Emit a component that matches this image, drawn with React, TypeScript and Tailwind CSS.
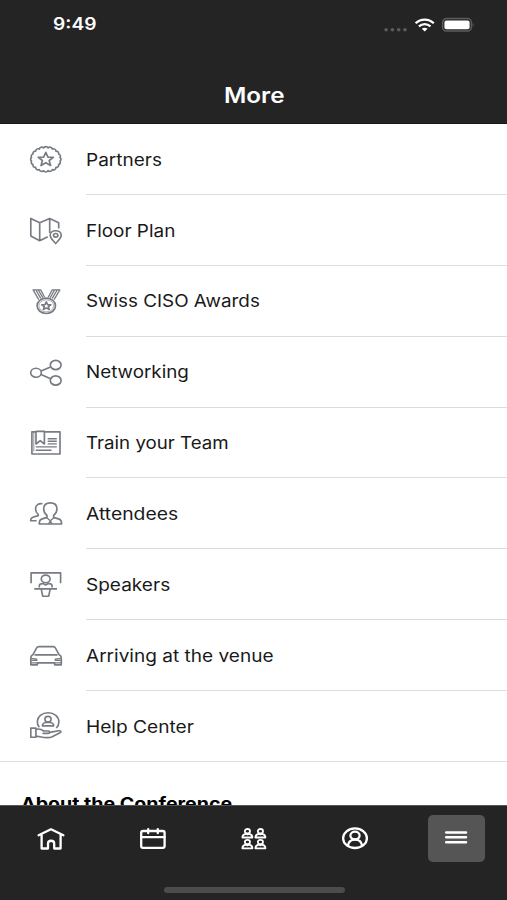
import React from "react";

const STAR = "M0 -1 L.27 -.34 L.95 -.31 L.42 .12 L.6 .81 L0 .42 L-.6 .81 L-.42 .12 L-.95 -.31 L-.27 -.34 Z";

const Icon: React.FC<{ children: React.ReactNode }> = ({ children }) => (
    <svg width="36" height="36" viewBox="0 0 36 36" fill="none" stroke="#777b82" strokeWidth="1.65" strokeLinejoin="round" className="shrink-0 mt-px">
        {children}
    </svg>
);

/** scalloped outline for the partners badge */
const scallops = () => {
    const n = 20;
    const point = (i: number) => {
        const a = ((i + 0.5) / n) * Math.PI * 2;
        return `${(17.8 + 14.4 * Math.cos(a)).toFixed(2)} ${(17.3 + 11.5 * Math.sin(a)).toFixed(2)}`;
    };
    let d = `M${point(0)}`;
    for (let i = 1; i <= n; i++) d += `A2.5 2.3 0 0 1 ${point(i)}`;
    return d + "Z";
};

const items = [
    {
        label: "Partners",
        width: 76,
        icon: (
            <Icon>
                <path d={scallops()} />
                <path d={STAR} transform="translate(17.8 17.6) scale(8 7.3)" vectorEffect="non-scaling-stroke" />
            </Icon>
        ),
    },
    {
        label: "Floor Plan",
        width: 89,
        icon: (
            <Icon>
                <path d="M30.7 15.4V9.7L21.7 5.4L11.7 9.7L2.8 5.4V23.1L11.7 27.7L19.7 23.8M11.7 9.7V27.7M21.7 5.4V20" />
                <path d="M27.7 30.6C25.8 28 22.2 25.6 22.2 22.3C22.2 19.5 24.7 17.7 27.7 17.7S33.2 19.5 33.2 22.3C33.2 25.6 29.6 28 27.7 30.6Z" />
                <ellipse cx="27.7" cy="22.3" rx="2.2" ry="1.8" />
            </Icon>
        ),
    },
    {
        label: "Swiss CISO Awards",
        width: 174,
        icon: (
            <Icon>
                <ellipse cx="18.3" cy="21.8" rx="9.2" ry="7.7" />
                <ellipse cx="18.3" cy="21.8" rx="7.4" ry="6" strokeWidth=".6" />
                <path d={STAR} transform="translate(18.3 22.1) scale(4.8 4.2)" vectorEffect="non-scaling-stroke" />
                <path d="M10.8 15.6L5.1 5.9H12.7L16.6 13.2M20.2 13.2L24.2 5.9H31.9L26 15.6M7.9 6L12.8 14.4M10.3 6L14.8 13.6M26.6 6L22.2 13.6M29.2 6L24.2 14.4" strokeWidth="1.3" />
            </Icon>
        ),
    },
    {
        label: "Networking",
        width: 103,
        icon: (
            <Icon>
                <ellipse cx="8" cy="17.7" rx="5.3" ry="4.5" />
                <ellipse cx="27.7" cy="10" rx="5.4" ry="4.6" />
                <ellipse cx="27.7" cy="25.5" rx="5.4" ry="4.6" />
                <path d="M13 16L22.6 12M13 19.6L22.6 23.7" />
            </Icon>
        ),
    },
    {
        label: "Train your Team",
        width: 143,
        icon: (
            <Icon>
                <path d="M8 6.9H3.9V29H32V6.9H16.4" />
                <path d="M8 6.4H16.4V19L12.2 15.6L8 19Z" />
                <path d="M5.8 7V26.5" strokeWidth=".8" />
                <path d="M19.7 13.7H28.8M19.7 16.3H28.8M19.7 18.9H28.8M7.7 21.9H28.8M7.7 25.2H23.5" strokeWidth="1.4" />
            </Icon>
        ),
    },
    {
        label: "Attendees",
        width: 92,
        icon: (
            <Icon>
                <path d="M19 19.5C16.7 17.7 15.5 15 15.7 12.3C15.9 8.8 18.5 6.8 22.3 6.8S28.7 8.8 28.9 12.3C29.1 15 27.9 17.7 25.6 19.5V21.4L31.2 23.1C33.2 23.9 33.6 25.3 33.6 28H11.2C11.2 25.3 11.6 23.9 13.6 23.1L19 21.4Z" />
                <path d="M18.5 21.6L22.3 24.8L26.2 21.6M22.3 24.8L20.5 28M22.3 24.8L24.2 28" strokeWidth="1.3" />
                <path d="M14.5 7.7C10.5 7 7.6 9.2 7.6 12.4C7.4 15 8.4 16.9 10.2 18.3V19.6L4.8 21.3C3.1 22 2.6 22.9 2.6 24.7H8.6" />
            </Icon>
        ),
    },
    {
        label: "Speakers",
        width: 84,
        icon: (
            <Icon>
                <path d="M3.1 16.3V5.9H32.6V16.3" />
                <ellipse cx="17.7" cy="11.9" rx="4.4" ry="3.8" />
                <path d="M11.3 20.4V18.7C11.3 17.2 12.6 16.6 15 16.6L17.7 18L20.4 16.6C22.8 16.6 24.1 17.2 24.1 18.7V20.4M6.2 21.9H29M13.2 21.9L14.7 29.2H20.7L22.2 21.9" />
            </Icon>
        ),
    },
    {
        label: "Arriving at the venue",
        width: 187,
        icon: (
            <Icon>
                <path d="M4.8 16.8L8.8 9.7C9.2 8.9 9.8 8.6 10.8 8.6H25.2C26.2 8.6 26.8 8.9 27.2 9.7L31.2 16.8C32.7 17.5 33.3 18.4 33.3 19.7V26.8H26.6V24.9H9.4V26.8H2.8V19.7C2.8 18.4 3.4 17.5 4.8 16.8ZM6.5 16.8H29.5" />
                <path d="M3.2 20.3L8.8 21.1V22.4H3M32.8 20.3L27.2 21.1V22.4H33M3 24.9H9.4M26.6 24.9H33" strokeWidth="1.2" />
            </Icon>
        ),
    },
    {
        label: "Help Center",
        width: 108,
        icon: (
            <Icon>
                <path d="M11.3 19.3C8.3 15.5 8.8 10.4 12.4 7.3C16.5 3.9 23.7 3.9 27.8 7.3C31.9 10.8 31.8 16.5 28.3 20" />
                <ellipse cx="20" cy="11.2" rx="3.1" ry="2.8" />
                <path d="M14.4 17.9C14.4 15.5 15.4 14.7 18.2 14.5H21.8C24.6 14.7 25.7 15.5 25.7 17.9Z" />
                <path d="M2.8 20.1H7.9V29.2H2.8ZM7.9 21.4C11 20.5 13.5 21.2 15.6 23H20.2C22.1 23 22.1 25.4 20.2 25.4H14.5M22 24.4L30.5 22.8C33.5 22.5 33.6 24 31.5 25L23.7 29C19.2 31 12.3 28.6 7.9 28.1" />
            </Icon>
        ),
    },
];

/** wide text, every label is fitted to its own width */
const Label: React.FC<{ text: string; width: number; className: string }> = ({ text, width, className }) => {
    const ref = React.useRef<HTMLSpanElement>(null);
    const [scale, setScale] = React.useState(1.17);

    React.useLayoutEffect(() => {
        if (ref.current) setScale(width / ref.current.offsetWidth);
    }, [width]);

    return (
        <span ref={ref} className={`inline-block origin-left whitespace-nowrap ${className}`} style={{ transform: `scaleX(${scale})` }}>
            {text}
        </span>
    );
};

const Person: React.FC<{ x: number; y: number }> = ({ x, y }) => (
    <g transform={`translate(${x} ${y})`}>
        <ellipse cx="5.2" cy="2.7" rx="2.6" ry="2.2" />
        <path d="M.2 9C.2 6.8 1.4 5.8 3.6 5.4L5.2 6L6.8 5.4C9 5.8 10.2 6.8 10.2 9Z" />
    </g>
);

const TabIcon: React.FC<{ children: React.ReactNode }> = ({ children }) => (
    <svg width="30" height="28" viewBox="0 0 30 28" fill="none" stroke="white" strokeWidth="2.3" strokeLinecap="round" strokeLinejoin="round">
        {children}
    </svg>
);

const App: React.FC = () => {
    return (
        <div className="flex flex-col w-full h-[900px] bg-white overflow-hidden font-[Inter,sans-serif]">
            {/** status bar and title */}
            <header className="h-[124px] shrink-0 bg-[#242424] text-white border-b border-[#161616]">
                <div className="flex h-[49px] items-center justify-between pl-[53px] pr-[33px]">
                    <Label text="9:49" width={44} className="text-[17px] font-semibold" />
                    <svg width="90" height="16" viewBox="0 0 90 16">
                        <g fill="#5c5c5c">
                            <circle cx="2.1" cy="12.7" r="1.8" />
                            <circle cx="8.4" cy="12.7" r="1.8" />
                            <circle cx="14.7" cy="12.7" r="1.8" />
                            <circle cx="21" cy="12.7" r="1.8" />
                        </g>
                        <g fill="none" stroke="white" strokeWidth="2.2">
                            <path d="M31.6 6.2C36.8 1.3 44.6 1.3 49.8 6.2" />
                            <path d="M34.9 9.4C38.3 6.3 43.1 6.3 46.5 9.4" />
                        </g>
                        <path d="M37.8 11.8C39.6 10.3 41.8 10.3 43.6 11.8L40.7 14.4Z" fill="white" />
                        <rect x="58.6" y="1.6" width="28.8" height="12.4" rx="3.8" fill="#242424" stroke="#5c5c5c" strokeWidth="1.5" />
                        <rect x="60.4" y="3.4" width="25.2" height="8.8" rx="2" fill="white" />
                        <path d="M88.6 5.9V9.9C90 9.3 90 6.5 88.6 5.9Z" fill="#5c5c5c" />
                    </svg>
                </div>
                <div className="flex pl-56">
                    <Label text="More" width={60} className="h-8 mt-8 text-[21px] leading-[30px] font-semibold" />
                </div>
            </header>

            {/** menu */}
            <main className="flex-1 min-h-0 overflow-hidden text-[#191919]">
                <ul>
                    {items.map(({ label, width, icon }, i) => (
                        <li key={label} className={`flex h-[70.88px] items-center pl-7 ${i === items.length - 1 ? "border-b border-[#dcdcdd]" : ""}`}>
                            {icon}
                            <div className={`flex flex-1 h-full items-center ml-[22px] pt-[1.5px] ${i < items.length - 1 ? "border-b border-[#dcdcdd]" : ""}`}>
                                <Label text={label} width={width} className="text-[17px] leading-6" />
                            </div>
                        </li>
                    ))}
                </ul>
                <h2 className="pl-[20.5px] pt-[30px] text-black">
                    <Label text="About the Conference" width={211} className="text-[17px] leading-6 font-bold" />
                </h2>
            </main>

            {/** bottom tabs */}
            <footer className="flex flex-col items-center h-[95px] shrink-0 bg-[#242424] border-t border-[#555]">
                <nav className="grid grid-cols-5 w-full pt-[9px]">
                    <div className="flex h-[47px] items-center justify-center">
                        <TabIcon>
                            <path d="M2.6 10.3L15 4.3L27.4 10.3M5.6 9.8V23.5H12V18.6C12 14.8 18.2 14.8 18.2 18.6V23.5H24.6V9.8" />
                        </TabIcon>
                    </div>
                    <div className="flex h-[47px] items-center justify-center">
                        <TabIcon>
                            <rect x="4.2" y="6" width="23.4" height="16.9" rx="1.8" />
                            <path d="M4.2 12.2H27.6M11.2 4.2V8.2M20.8 4.2V8.2" />
                        </TabIcon>
                    </div>
                    <div className="flex h-[47px] items-center justify-center">
                        <svg width="30" height="28" viewBox="0 0 30 28" fill="none" stroke="white" strokeWidth="1.8" strokeLinejoin="round">
                            <Person x={4.2} y={3.5} />
                            <Person x={17.2} y={3.5} />
                            <Person x={4.2} y={14.3} />
                            <Person x={17.2} y={14.3} />
                        </svg>
                    </div>
                    <div className="flex h-[47px] items-center justify-center">
                        <TabIcon>
                            <ellipse cx="15" cy="13.2" rx="11.9" ry="9.8" />
                            <ellipse cx="15" cy="10.6" rx="4.6" ry="3.9" />
                            <path d="M7.8 20.8C8.5 16.7 11 14.7 15 14.7S21.5 16.7 22.2 20.8" />
                        </TabIcon>
                    </div>
                    <div className="flex h-[46.5px] w-[57px] items-center justify-center justify-self-center rounded-[5px] bg-[#555]">
                        <TabIcon>
                            <path d="M5.2 8.4H25M5.2 13.3H25M5.2 18.2H25" strokeWidth="2.5" />
                        </TabIcon>
                    </div>
                </nav>
                <div className="mt-[25px] h-[5.5px] w-[181px] ml-px rounded-full bg-[#4c4c4c]" />
            </footer>
        </div>
    );
};
export default App;
